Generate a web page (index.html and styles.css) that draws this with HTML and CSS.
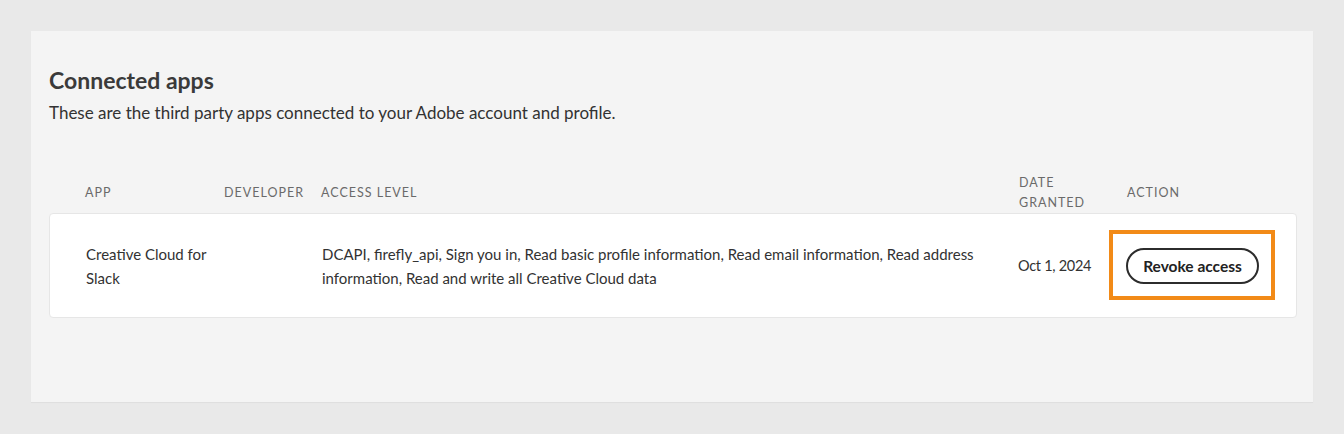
FILE: index.html
```html
<!DOCTYPE html>
<html lang="en">
<head>
    <meta charset="UTF-8">
    <title>Connected apps</title>
    <link rel="stylesheet" href="styles.css">
</head>
<body>
    <div class="panel">
        <h2 class="title">Connected apps</h2>
        <p class="subtitle">These are the third party apps connected to your Adobe account and profile.</p>

        <div class="table">
            <div class="table-head">
                <div>App</div>
                <div>Developer</div>
                <div>Access level</div>
                <div>Date<br>granted</div>
                <div>Action</div>
            </div>
            <div class="table-row">
                <div class="app-name">Creative Cloud for Slack</div>
                <div></div>
                <div>DCAPI, firefly_api, Sign you in, Read basic profile information, Read email information, Read address information, Read and write all Creative Cloud data</div>
                <div class="date">Oct 1, 2024</div>
                <div class="action">
                    <button class="revoke">Revoke access</button>
                </div>
            </div>
        </div>
    </div>
</body>
</html>
```

FILE: styles.css
```css
* {
  box-sizing: border-box;
  margin: 0;
  padding: 0;
}

body {
  font-family: 'Lato', sans-serif;
  background-color: #e9e9e9;
  padding: 31px;
  color: #323232;
}

.panel {
  background-color: #f4f4f4;
  height: 371px;
  padding: 34px 16px 0 18px;
  box-shadow: 0 1px 1px rgba(0, 0, 0, 0.04);
}

.title {
  font-size: 23px;
  font-weight: bold;
  color: #3a3a3a;
  line-height: 30px;
}

.subtitle {
  font-size: 17px;
  line-height: 22px;
  margin-top: 7px;
}

.table {
  margin-top: 49px;
}

.table-head, .table-row {
  display: grid;
  grid-template-columns: 139px 97px 1fr 108px 134px;
  padding: 0 36px 0 36px;
  align-items: center;
}

.table-head {
  font-size: 12.5px;
  letter-spacing: 1px;
  text-transform: uppercase;
  color: #6a6a6a;
  line-height: 20px;
}

.table-row {
  background-color: white;
  border: 1px solid #e6e6e6;
  border-radius: 4px;
  height: 105px;
  font-size: 15px;
  line-height: 24px;
}

.app-name {
  padding-right: 8px;
}

.date {
  font-size: 14.5px;
  letter-spacing: -0.3px;
}

.action {
  position: relative;
}

.action::after {
  content: '';
  position: absolute;
  top: -18px;
  bottom: -16px;
  left: -17px;
  right: -15px;
  border: 4px solid #f28a17;
  pointer-events: none;
}

.revoke {
  font-family: inherit;
  font-size: 15.5px;
  font-weight: bold;
  color: #222;
  background-color: white;
  border: 2px solid #2c2c2c;
  border-radius: 18px;
  height: 36px;
  width: 133px;
  cursor: pointer;
}
```
